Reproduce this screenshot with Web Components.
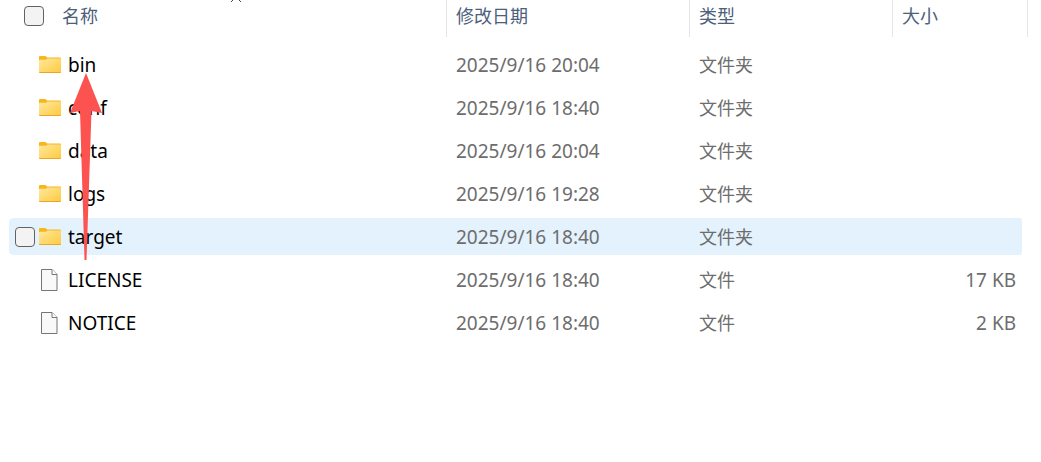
<!DOCTYPE html>
<html lang="zh-CN">
<head>
<meta charset="utf-8">
<title>文件列表</title>
<style>
  body { margin: 0; background: #fff; font-family: "Noto Sans", "Noto Sans CJK SC", sans-serif; }
</style>
</head>
<body>
<file-explorer>
  <file-list></file-list>
  <pointer-arrow slot="overlay"></pointer-arrow>
</file-explorer>

<script>
class FileExplorer extends HTMLElement {
  constructor() {
    super();
    this.attachShadow({ mode: "open" }).innerHTML = `
      <style>
        :host { display: block; position: relative; padding: 0 13px 0 9px; }
        ::slotted([slot=overlay]) { position: absolute; left: 70px; top: 73px; }
      </style>
      <slot></slot><slot name="overlay"></slot>`;
  }
}

class PointerArrow extends HTMLElement {
  constructor() {
    super();
    this.attachShadow({ mode: "open" }).innerHTML = `
      <style>
        :host { display: block; pointer-events: none; }
        svg { display: block; }
      </style>
      <svg width="32" height="187" viewBox="0 0 32 187" aria-hidden="true">
        <path d="M16 0 L32 40 L21.5 38 L16.500 187 L14.500 187 L10 38 L0 40 Z" fill="#fc5351"/>
      </svg>`;
  }
}

class CheckBox extends HTMLElement {
  constructor() {
    super();
    this.attachShadow({ mode: "open" }).innerHTML = `
      <style>
        :host { display: block; flex: none; }
        input { appearance: none; display: block; box-sizing: border-box; width: 20px; height: 20px; margin: 0;
                border: 1px solid #626262; border-radius: 4px; background: #f3f3f3; }
        input:checked { background: #0067c0; }
      </style>
      <input type="checkbox">`;
    this.shadowRoot.querySelector("input").setAttribute("aria-label", this.getAttribute("label") || "");
  }
}

class FileIcon extends HTMLElement {
  connectedCallback() {
    if (this.shadowRoot) return;
    const folder = `
      <defs>
        <linearGradient id="g" x1="0" y1="0" x2="1" y2="1">
          <stop offset="0" stop-color="#ffe8a0"/><stop offset="1" stop-color="#ffca3c"/>
        </linearGradient>
      </defs>
      <path d="M0 3 Q0 2 1 2 H6.500 L8 3.500 H21 Q22 3.500 22 4.500 V10 H0 Z" fill="#f8b51c"/>
      <path d="M0 6.500 Q0 5.800 1 5.800 H7 L8.500 4.500 H22 V18 Q22 19 21 19 H1 Q0 19 0 18 Z" fill="url(#g)"/>
      <path d="M0 18 H22 Q22 19 21 19 H1 Q0 19 0 18 Z" fill="#e9a72a"/>`;
    const file = `
      <path d="M2.500 0.500 H13 L18 5.500 V21.500 H2.500 Z" fill="#f9f9f9" stroke="#757575"/>
      <path d="M13 0.500 V5.500 H18" fill="#fff" stroke="#757575"/>`;
    this.attachShadow({ mode: "open" }).innerHTML = `
      <style>
        :host { display: block; flex: none; }
        svg { display: block; }
      </style>
      <svg width="22" height="22" viewBox="0 0 22 22" aria-hidden="true">${this.getAttribute("kind") === "folder" ? folder : file}</svg>`;
  }
}

class FileList extends HTMLElement {
  constructor() {
    super();
    const files = [
      ["bin", "2025/9/16 20:04", "文件夹", ""],
      ["conf", "2025/9/16 18:40", "文件夹", ""],
      ["data", "2025/9/16 20:04", "文件夹", ""],
      ["logs", "2025/9/16 19:28", "文件夹", ""],
      ["target", "2025/9/16 18:40", "文件夹", ""],
      ["LICENSE", "2025/9/16 18:40", "文件", "17 KB"],
      ["NOTICE", "2025/9/16 18:40", "文件", "2 KB"]
    ];
    const rows = files.map(([name, date, type, size]) => `
      <tr class="${name === "target" ? "active" : ""}">
        <td><div class="name"><check-box label="${name}"></check-box><file-icon kind="${type === "文件夹" ? "folder" : "file"}"></file-icon><span>${name}</span></div></td>
        <td>${date}</td><td class="cjk">${type}</td><td class="size">${size}</td>
      </tr>`).join("");
    this.attachShadow({ mode: "open" }).innerHTML = `
      <style>
        :host { display: block; }
        table { width: 100%; table-layout: fixed; border-collapse: separate; border-spacing: 0; }
        .c-date { width: 243px; } .c-type { width: 203px; } .c-size { width: 136px; }
        th { padding: 0 0 6px; font-weight: 400; text-align: left; font-size: 18px; color: #4c607a; }
        .head { position: relative; box-sizing: border-box; display: flex; align-items: center; height: 37px;
                padding: 0 9px 5px; border-left: 1px solid #e5e5e5; line-height: 32px; }
        th:first-child .head { border-left: 0; padding-left: 15px; gap: 18px; }
        th:last-child .head { border-right: 1px solid #e5e5e5; }
        .sort { position: absolute; left: 50%; top: -4px; margin-left: 1px; }
        td { box-sizing: border-box; height: 43px; padding: 2px 0 0 10px; border: solid transparent; border-width: 3px 0;
             background-clip: padding-box; font-size: 19px; line-height: 35px; color: #6d6d6d; white-space: nowrap; }
        td:first-child { padding: 0 0 0 6px; color: #000; border-radius: 6px 0 0 6px; }
        td.cjk { font-size: 18px; }
        td.size { padding: 2px 6px 0 0; border-right-width: 6px; border-radius: 0 8px 8px 0; text-align: right; }
        .name { display: flex; align-items: center; height: 37px; }
        .name span { padding-top: 2px; }
        .name check-box { visibility: hidden; margin-right: 4px; }
        .name file-icon { margin-right: 7px; }
        tr.active td { background-color: #e4f2fd; }
        tr.active check-box { visibility: visible; }
      </style>
      <table>
        <colgroup><col><col class="c-date"><col class="c-type"><col class="c-size"></colgroup>
        <thead><tr>
          <th scope="col"><div class="head"><check-box label="全选"></check-box><span>名称</span>
            <svg class="sort" width="14" height="7" viewBox="0 0 14 7" aria-hidden="true"><path d="M2 6 L7 1 L12 6" fill="none" stroke="#444"/></svg></div></th>
          <th scope="col"><div class="head">修改日期</div></th>
          <th scope="col"><div class="head">类型</div></th>
          <th scope="col"><div class="head">大小</div></th>
        </tr></thead>
        <tbody>${rows}</tbody>
      </table>`;
  }
}

customElements.define("check-box", CheckBox);
customElements.define("file-icon", FileIcon);
customElements.define("file-list", FileList);
customElements.define("pointer-arrow", PointerArrow);
customElements.define("file-explorer", FileExplorer);
</script>
</body>
</html>
